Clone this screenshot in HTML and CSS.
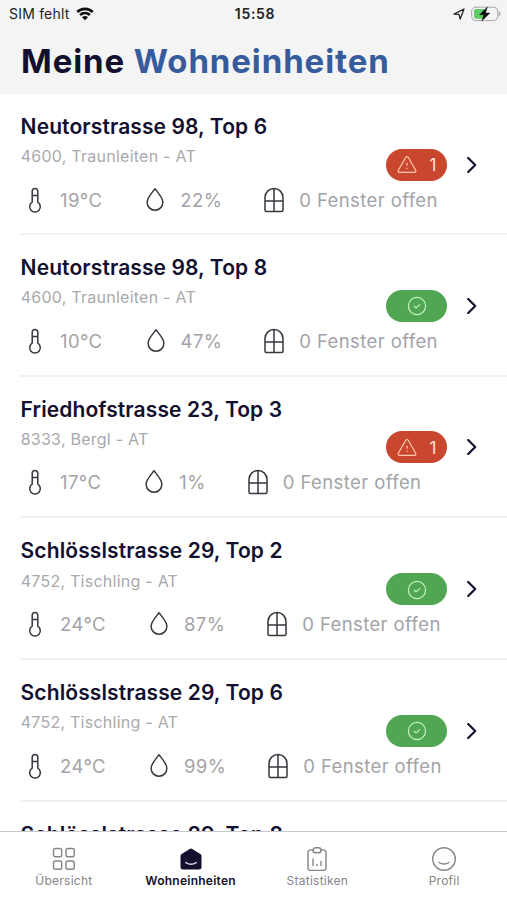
FILE: index.html
```html
<!DOCTYPE html>
<html lang="de">
<head>
    <meta charset="UTF-8">
    <meta name="viewport" content="width=device-width, initial-scale=1.0">
    <title>Meine Wohneinheiten</title>
    <link rel="stylesheet" href="styles.css">
</head>
<body>
    <!-- Icons -->
    <svg class="sprite" width="0" height="0">
        <symbol id="thermo" viewBox="0 0 26 26">
            <path d="M10.200 15.200V4.300a2.800 2.800 0 0 1 5.600 0v10.900a5.300 5.300 0 1 1-5.600 0zM10.200 8.600h5.600"/>
        </symbol>
        <symbol id="drop" viewBox="0 0 26 26">
            <path d="M13 1.800c3 4 7.900 8.800 7.900 13.500a7.900 7.900 0 0 1-15.800 0c0-4.700 4.900-9.500 7.900-13.500z"/>
        </symbol>
        <symbol id="window" viewBox="0 0 26 26">
            <path d="M4 10.500a9 9 0 0 1 18 0v12.500a1.500 1.500 0 0 1-1.500 1.500h-15a1.500 1.500 0 0 1-1.500-1.500zM13 1.500v23M4 14h18"/>
        </symbol>
        <symbol id="warn" viewBox="0 0 20 20">
            <path d="M8.800 2.200L1.300 15.300a1.300 1.300 0 0 0 1.200 2h15a1.300 1.300 0 0 0 1.200-2L11.200 2.200a1.400 1.400 0 0 0-2.400 0zM10 8v2.200M10 13v.500"/>
        </symbol>
        <symbol id="check" viewBox="0 0 20 20">
            <circle cx="10" cy="10" r="8.600"/>
            <path d="M7.200 10.200l1.900 1.700 3.700-3.300"/>
        </symbol>
        <symbol id="chevron" viewBox="0 0 10 16">
            <path d="M1.200 1l7 7-7 7"/>
        </symbol>
    </svg>

    <header class="header">
        <div class="status">
            <div class="carrier">
                <span>SIM fehlt</span>
                <svg class="wifi" viewBox="0 0 18 14">
                    <path d="M1.200 5a11.200 11.200 0 0 1 15.600 0M4.100 8a7 7 0 0 1 9.800 0"/>
                    <path class="dot" d="M9 13.300L6 10.300a4.400 4.400 0 0 1 6 0z"/>
                </svg>
            </div>
            <div class="time">15:58</div>
            <div class="power">
                <svg class="location" viewBox="0 0 12 12"><path d="M1 6.200L11 1 7.200 11 6 6.300z"/></svg>
                <svg class="battery" viewBox="0 0 30 16">
                    <rect x="0.700" y="1.200" width="26" height="13.400" rx="4" fill="#f4f4f4" stroke="#a5aaa5"/>
                    <path d="M5 3h8v9.800h-8a2 2 0 0 1-2-2v-5.800a2 2 0 0 1 2-2z" fill="#5fca67" stroke="none"/>
                    <path d="M28 5.700v4.400c1.800-.800 1.800-3.600 0-4.400z" fill="#a5aaa5" stroke="#a5aaa5" stroke-width=".5"/>
                    <path d="M16.300 1L8.500 8.800h4.300l-2 6.200 8.200-8h-4.400z" fill="#111" stroke="#111" stroke-width=".4"/>
                </svg>
            </div>
        </div>
        <h1>Meine <span>Wohneinheiten</span></h1>
    </header>

    <main class="list">
        <article class="unit">
            <div class="info">
                <h2>Neutorstrasse 98, Top 6</h2>
                <p>4600, Traunleiten - AT</p>
                <div class="values">
                    <div class="value"><svg><use href="#thermo"/></svg>19°C</div>
                    <div class="value"><svg><use href="#drop"/></svg>22%</div>
                    <div class="value"><svg><use href="#window"/></svg>0 Fenster offen</div>
                </div>
            </div>
            <div class="state">
                <div class="badge alert"><svg><use href="#warn"/></svg><span>1</span></div>
                <svg class="chevron"><use href="#chevron"/></svg>
            </div>
        </article>
        <article class="unit">
            <div class="info">
                <h2>Neutorstrasse 98, Top 8</h2>
                <p>4600, Traunleiten - AT</p>
                <div class="values">
                    <div class="value"><svg><use href="#thermo"/></svg>10°C</div>
                    <div class="value"><svg><use href="#drop"/></svg>47%</div>
                    <div class="value"><svg><use href="#window"/></svg>0 Fenster offen</div>
                </div>
            </div>
            <div class="state">
                <div class="badge"><svg><use href="#check"/></svg></div>
                <svg class="chevron"><use href="#chevron"/></svg>
            </div>
        </article>
        <article class="unit">
            <div class="info">
                <h2>Friedhofstrasse 23, Top 3</h2>
                <p>8333, Bergl - AT</p>
                <div class="values">
                    <div class="value"><svg><use href="#thermo"/></svg>17°C</div>
                    <div class="value"><svg><use href="#drop"/></svg>1%</div>
                    <div class="value"><svg><use href="#window"/></svg>0 Fenster offen</div>
                </div>
            </div>
            <div class="state">
                <div class="badge alert"><svg><use href="#warn"/></svg><span>1</span></div>
                <svg class="chevron"><use href="#chevron"/></svg>
            </div>
        </article>
        <article class="unit">
            <div class="info">
                <h2>Schlösslstrasse 29, Top 2</h2>
                <p>4752, Tischling - AT</p>
                <div class="values">
                    <div class="value"><svg><use href="#thermo"/></svg>24°C</div>
                    <div class="value"><svg><use href="#drop"/></svg>87%</div>
                    <div class="value"><svg><use href="#window"/></svg>0 Fenster offen</div>
                </div>
            </div>
            <div class="state">
                <div class="badge"><svg><use href="#check"/></svg></div>
                <svg class="chevron"><use href="#chevron"/></svg>
            </div>
        </article>
        <article class="unit">
            <div class="info">
                <h2>Schlösslstrasse 29, Top 6</h2>
                <p>4752, Tischling - AT</p>
                <div class="values">
                    <div class="value"><svg><use href="#thermo"/></svg>24°C</div>
                    <div class="value"><svg><use href="#drop"/></svg>99%</div>
                    <div class="value"><svg><use href="#window"/></svg>0 Fenster offen</div>
                </div>
            </div>
            <div class="state">
                <div class="badge"><svg><use href="#check"/></svg></div>
                <svg class="chevron"><use href="#chevron"/></svg>
            </div>
        </article>
        <article class="unit">
            <div class="info">
                <h2>Schlösslstrasse 29, Top 8</h2>
            </div>
        </article>
    </main>

    <!-- Navigation -->
    <nav class="tabs">
        <a class="tab">
            <svg viewBox="0 0 24 24">
                <rect x="1.500" y="1.500" width="8.200" height="8.200" rx="1.800"/>
                <rect x="14" y="1.500" width="8.200" height="8.200" rx="1.800"/>
                <rect x="1.500" y="14" width="8.200" height="8.200" rx="1.800"/>
                <rect x="14" y="14" width="8.200" height="8.200" rx="1.800"/>
            </svg>
            <span>Übersicht</span>
        </a>
        <a class="tab active">
            <svg viewBox="0 0 24 24">
                <path class="house" d="M10.700 1.900L2.600 6.900Q1.500 7.600 1.500 8.900V20q0 2.500 2.500 2.500h16q2.500 0 2.500-2.500V8.900q0-1.300-1.100-2L13.300 1.900q-1.300-.8-2.600 0z"/>
                <path class="smile" d="M6.800 15.600q5.200 3.400 10.400 0"/>
            </svg>
            <span>Wohneinheiten</span>
        </a>
        <a class="tab">
            <svg viewBox="0 0 24 24">
                <path d="M8.200 2.900H5.500A2.500 2.500 0 0 0 3 5.400v15.600a2.500 2.500 0 0 0 2.500 2.500h13a2.500 2.500 0 0 0 2.500-2.500V5.400a2.500 2.500 0 0 0-2.500-2.500h-2.700"/>
                <rect x="8" y="0.700" width="8" height="5" rx="2.500"/>
                <path d="M8 18.500v-6.500M12 18.500v-1M16 18.500v-4"/>
            </svg>
            <span>Statistiken</span>
        </a>
        <a class="tab">
            <svg viewBox="0 0 24 24">
                <circle cx="12" cy="12" r="11.300"/>
                <path d="M6.900 15.500q5.100 3 10.200 0"/>
            </svg>
            <span>Profil</span>
        </a>
    </nav>
</body>
</html>
```
FILE: styles.css
```css
* {
    box-sizing: border-box;
}
body {
    font-family: Inter, "Liberation Sans", sans-serif;
    background-color: #fff;
    color: #12102e;
    display: flex;
    flex-direction: column;
    height: 900px;
    margin: 0;
    overflow: hidden;
}
h1, h2, p {
    margin: 0;
}
svg {
    fill: none;
    stroke: currentColor;
    stroke-linecap: round;
    stroke-linejoin: round;
    flex-shrink: 0;
}
.sprite {
    display: none;
}
.header {
    background-color: #f4f4f4;
    height: 94px;
    flex-shrink: 0;
}
.status {
    display: grid;
    grid-template-columns: 1fr auto 1fr;
    align-items: center;
    height: 27px;
    padding: 0 6px 0 9px;
    color: #222;
    font-size: 14px;
}
.carrier {
    display: flex;
    align-items: center;
    gap: 6px;
    letter-spacing: 0.2px;
}
.wifi {
    width: 18px;
    height: 14px;
    color: #111;
    stroke-width: 2.6;
    stroke-linecap: butt;
}
.wifi .dot {
    fill: #111;
    stroke: none;
}
.time {
    font-weight: 600;
    letter-spacing: 0.7px;
}
.power {
    display: flex;
    align-items: center;
    justify-content: flex-end;
    gap: 6px;
}
.location {
    width: 12px;
    height: 12px;
    stroke-width: 1.3;
}
.battery {
    width: 30px;
    height: 16px;
}
h1 {
    font-size: 33px;
    line-height: 40px;
    font-weight: 700;
    letter-spacing: 0.9px;
    padding: 14px 0 0 21px;
    white-space: nowrap;
}
h1 span {
    color: #365c9e;
}
.list {
    flex: 1;
    min-height: 0;
    overflow: hidden;
}
.unit {
    display: flex;
    justify-content: space-between;
    height: 141.7px;
    margin-left: 20px;
    border-bottom: 2px solid #f2f2f3;
}
.unit:first-child {
    height: 141px;
}
.info {
    white-space: nowrap;
}
h2 {
    font-size: 21px;
    line-height: 26px;
    font-weight: 600;
    letter-spacing: 0.1px;
    padding: 20px 0 0 0.6px;
}
.info p {
    color: #a9a9ad;
    font-size: 16px;
    line-height: 20px;
    letter-spacing: 0.25px;
    margin-top: 6.4px;
    padding-left: 0.7px;
}
.values {
    display: flex;
    gap: 39px;
    margin: 20.3px 0 0 2px;
}
.value {
    display: flex;
    align-items: center;
    gap: 12px;
    color: #a3a3a7;
    font-size: 18.5px;
    line-height: 26px;
    letter-spacing: 0.4px;
}
.value:first-child {
    padding-right: 1px;
}
.value svg {
    width: 26px;
    height: 26px;
    color: #36363f;
    stroke-width: 1.5;
}
.state {
    display: flex;
    align-items: center;
    gap: 20px;
    height: 32px;
    margin: 54.8px 30px 0 -100px;
}
.badge {
    display: flex;
    align-items: center;
    justify-content: center;
    gap: 13px;
    width: 61px;
    height: 32px;
    border-radius: 16px;
    background-color: #50a653;
    color: #c6f3c0;
    padding-top: 1px;
}
.badge svg {
    width: 20px;
    height: 20px;
    stroke-width: 1.2;
}
.badge.alert {
    background-color: #c9472e;
    color: #ffc9ac;
}
.badge span {
    color: #ffe6d4;
    font-size: 17px;
}
.chevron {
    width: 10px;
    height: 16px;
    stroke-width: 2.2;
}
.tabs {
    display: grid;
    grid-template-columns: repeat(4, 1fr);
    height: 69px;
    flex-shrink: 0;
    border-top: 1px solid #c9c9cb;
    background-color: #fff;
}
.tab {
    display: flex;
    flex-direction: column;
    align-items: center;
    padding: 15px 0 0 1px;
    color: #85858a;
    font-size: 12px;
    line-height: 16px;
    letter-spacing: 0.25px;
}
.tab svg {
    width: 24px;
    height: 24px;
    margin-bottom: 2px;
    stroke-width: 1.4;
}
.tab.active {
    color: #12102e;
    font-weight: 600;
}
.house {
    fill: #12102e;
    stroke: none;
}
.smile {
    stroke: #d8d8e6;
}
```
